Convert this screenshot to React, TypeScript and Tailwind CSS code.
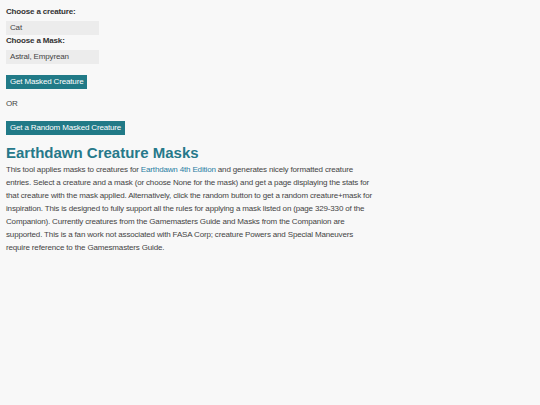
export default function App() {
    return (
        <div className="min-h-[405px] w-full bg-[#f8f8f8] px-[6px] pt-[6px] text-[#333] font-['Liberation_Sans',Arial,sans-serif] text-[8px] tracking-[-0.16px]">
            <form className="flex flex-col items-start">
                <label className="font-bold leading-[10px] mt-[1px]">Choose a creature:</label>
                <div className="mt-[4px] w-[93px] h-[14px] bg-[#ececec] px-[4px] flex items-center text-[#444]">Cat</div>
                <label className="font-bold leading-[10px] mt-[1px]">Choose a Mask:</label>
                <div className="mt-[4px] w-[93px] h-[14px] bg-[#ececec] px-[4px] flex items-center text-[#444]">Astral, Empyrean</div>
                <button type="button" className="mt-[11px] h-[14px] px-[4px] bg-[#217a87] text-white flex items-center">Get Masked Creature</button>
                <p className="mt-[10px] leading-[10px] text-[#444]">OR</p>
                <button type="button" className="mt-[12px] h-[14px] px-[4px] bg-[#217a87] text-white flex items-center">Get a Random Masked Creature</button>
            </form>
            <h1 className="mt-[8px] text-[15px] leading-[20px] font-bold tracking-normal text-[#26798a]">Earthdawn Creature Masks</h1>
            <p className="w-[368px] leading-[13px] text-[#444]">
                This tool applies masks to creatures for <a className="text-[#2a7ea3]">Earthdawn 4th Edition</a> and generates nicely formatted creature entries. Select a creature and a mask (or choose None for the mask) and get a page displaying the stats for that creature with the mask applied. Alternatively, click the random button to get a random creature+mask for inspiration. This is designed to fully support all the rules for applying a mask listed on (page 329-330 of the Companion). Currently creatures from the Gamemasters Guide and Masks from the Companion are supported. This is a fan work not associated with FASA Corp; creature Powers and Special Maneuvers require reference to the Gamesmasters Guide.
            </p>
        </div>
    )
}
